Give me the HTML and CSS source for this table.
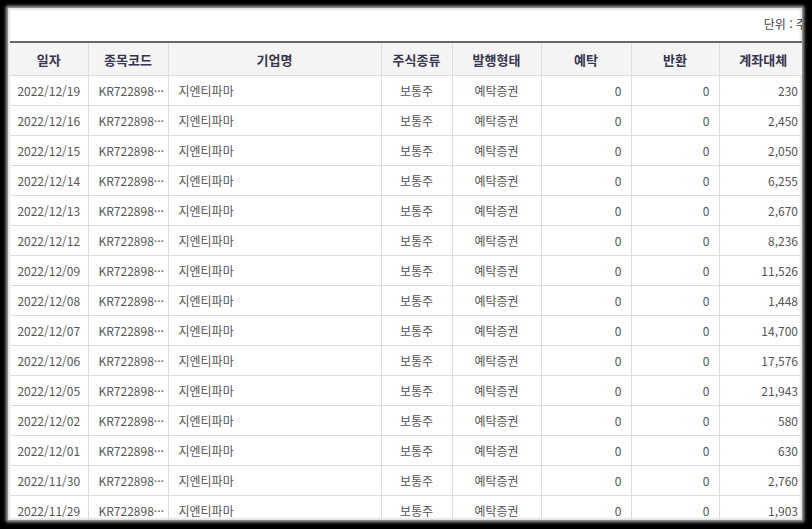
FILE: index.html
```html
<!DOCTYPE html>
<html lang="ko">
<head>
<meta charset="utf-8">
<link rel="stylesheet" href="styles.css">
</head>
<body>
<div class="sheet">
  <div class="inner">
    <div class="unit">단위 : 주</div>
    <table class="grid">
      <colgroup>
        <col class="c1"><col class="c2"><col class="c3"><col class="c4"><col class="c5"><col class="c6"><col class="c7"><col class="c8">
      </colgroup>
      <thead>
        <tr><th>일자</th><th>종목코드</th><th>기업명</th><th>주식종류</th><th>발행형태</th><th>예탁</th><th>반환</th><th>계좌대체</th></tr>
      </thead>
      <tbody>
        <tr><td class="ctr">2022/12/19</td><td class="code">KR722898···</td><td>지엔티파마</td><td class="ctr">보통주</td><td class="ctr">예탁증권</td><td class="num">0</td><td class="num">0</td><td class="num">230</td></tr>
        <tr><td class="ctr">2022/12/16</td><td class="code">KR722898···</td><td>지엔티파마</td><td class="ctr">보통주</td><td class="ctr">예탁증권</td><td class="num">0</td><td class="num">0</td><td class="num">2,450</td></tr>
        <tr><td class="ctr">2022/12/15</td><td class="code">KR722898···</td><td>지엔티파마</td><td class="ctr">보통주</td><td class="ctr">예탁증권</td><td class="num">0</td><td class="num">0</td><td class="num">2,050</td></tr>
        <tr><td class="ctr">2022/12/14</td><td class="code">KR722898···</td><td>지엔티파마</td><td class="ctr">보통주</td><td class="ctr">예탁증권</td><td class="num">0</td><td class="num">0</td><td class="num">6,255</td></tr>
        <tr><td class="ctr">2022/12/13</td><td class="code">KR722898···</td><td>지엔티파마</td><td class="ctr">보통주</td><td class="ctr">예탁증권</td><td class="num">0</td><td class="num">0</td><td class="num">2,670</td></tr>
        <tr><td class="ctr">2022/12/12</td><td class="code">KR722898···</td><td>지엔티파마</td><td class="ctr">보통주</td><td class="ctr">예탁증권</td><td class="num">0</td><td class="num">0</td><td class="num">8,236</td></tr>
        <tr><td class="ctr">2022/12/09</td><td class="code">KR722898···</td><td>지엔티파마</td><td class="ctr">보통주</td><td class="ctr">예탁증권</td><td class="num">0</td><td class="num">0</td><td class="num">11,526</td></tr>
        <tr><td class="ctr">2022/12/08</td><td class="code">KR722898···</td><td>지엔티파마</td><td class="ctr">보통주</td><td class="ctr">예탁증권</td><td class="num">0</td><td class="num">0</td><td class="num">1,448</td></tr>
        <tr><td class="ctr">2022/12/07</td><td class="code">KR722898···</td><td>지엔티파마</td><td class="ctr">보통주</td><td class="ctr">예탁증권</td><td class="num">0</td><td class="num">0</td><td class="num">14,700</td></tr>
        <tr><td class="ctr">2022/12/06</td><td class="code">KR722898···</td><td>지엔티파마</td><td class="ctr">보통주</td><td class="ctr">예탁증권</td><td class="num">0</td><td class="num">0</td><td class="num">17,576</td></tr>
        <tr><td class="ctr">2022/12/05</td><td class="code">KR722898···</td><td>지엔티파마</td><td class="ctr">보통주</td><td class="ctr">예탁증권</td><td class="num">0</td><td class="num">0</td><td class="num">21,943</td></tr>
        <tr><td class="ctr">2022/12/02</td><td class="code">KR722898···</td><td>지엔티파마</td><td class="ctr">보통주</td><td class="ctr">예탁증권</td><td class="num">0</td><td class="num">0</td><td class="num">580</td></tr>
        <tr><td class="ctr">2022/12/01</td><td class="code">KR722898···</td><td>지엔티파마</td><td class="ctr">보통주</td><td class="ctr">예탁증권</td><td class="num">0</td><td class="num">0</td><td class="num">630</td></tr>
        <tr><td class="ctr">2022/11/30</td><td class="code">KR722898···</td><td>지엔티파마</td><td class="ctr">보통주</td><td class="ctr">예탁증권</td><td class="num">0</td><td class="num">0</td><td class="num">2,760</td></tr>
        <tr><td class="ctr">2022/11/29</td><td class="code">KR722898···</td><td>지엔티파마</td><td class="ctr">보통주</td><td class="ctr">예탁증권</td><td class="num">0</td><td class="num">0</td><td class="num">1,903</td></tr>
      </tbody>
    </table>
  </div>
</div>
</body>
</html>
```
FILE: styles.css
```css
html, body {
  margin: 0;
  padding: 0;
  background: #000;
  height: 529px;
  overflow: hidden;
}
body {
  padding: 8px 0 0 8px;
  box-sizing: border-box;
  font-family: "Noto Sans CJK KR", "Noto Sans", sans-serif;
}
.sheet {
  width: 794px;
  height: 512px;
  background: #fff;
  overflow: hidden;
  box-shadow: 0 0 3px 2px rgba(190, 190, 190, 0.9), inset 0 0 3px 1px rgba(200, 200, 200, 0.8);
  padding-left: 2px;
  box-sizing: border-box;
}
.inner {
  width: 797px;
}
.unit {
  height: 33px;
  line-height: 32px;
  text-align: right;
  font-size: 12px;
  color: #444;
  padding-right: 0;
}
.grid {
  width: 797px;
  table-layout: fixed;
  border-collapse: collapse;
  border-top: 2px solid #666;
}
.c1 { width: 78px; }
.c2 { width: 80px; }
.c3 { width: 213px; }
.c4 { width: 71px; }
.c5 { width: 89px; }
.c6 { width: 90px; }
.c7 { width: 88px; }
.c8 { width: 88px; }
th {
  height: 32px;
  padding: 0;
  background: #f4f4f4;
  font-size: 13px;
  font-weight: bold;
  color: #363650;
  text-align: center;
  border-left: 1px solid #ddd;
  border-bottom: 1px solid #ddd;
}
td {
  height: 29px;
  padding: 0 10px;
  font-size: 12px;
  color: #555;
  border-left: 1px solid #ddd;
  border-bottom: 1px solid #ddd;
  white-space: nowrap;
  overflow: hidden;
}
th:first-child, td:first-child { border-left: none; }
.ctr { text-align: center; padding: 0 4px; }
.code { text-overflow: clip; }
.num { text-align: right; padding-right: 9px; }
```
